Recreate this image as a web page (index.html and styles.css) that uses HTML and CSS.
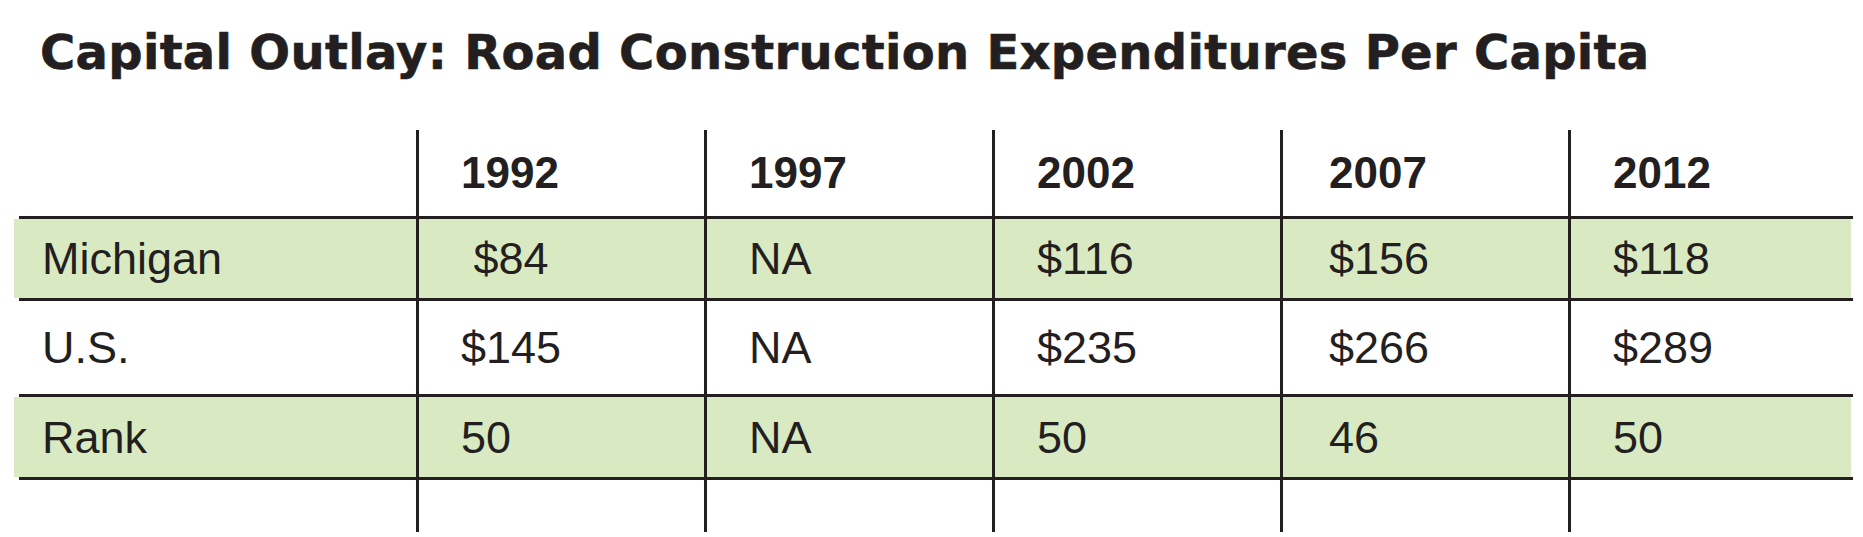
FILE: index.html
```html
<!DOCTYPE html>
<html lang="en">

<head>
  <meta charset="UTF-8">
  <meta name="viewport" content="width=device-width, initial-scale=1.0">
  <title>Capital Outlay: Road Construction Expenditures Per Capita</title>
  <link rel="stylesheet" href="styles.css">
</head>

<body>
  <h1 class="title">Capital Outlay: Road Construction Expenditures Per Capita</h1>
  <div class="table">
    <div class="row head">
      <div class="cell label"></div>
      <div class="cell">1992</div>
      <div class="cell">1997</div>
      <div class="cell">2002</div>
      <div class="cell shift">2007</div>
      <div class="cell">2012</div>
    </div>
    <div class="rule"></div>
    <div class="row green r1">
      <div class="cell label">Michigan</div>
      <div class="cell">&nbsp;$84</div>
      <div class="cell">NA</div>
      <div class="cell">$116</div>
      <div class="cell shift">$156</div>
      <div class="cell">$118</div>
    </div>
    <div class="rule"></div>
    <div class="row r2">
      <div class="cell label">U.S.</div>
      <div class="cell">$145</div>
      <div class="cell">NA</div>
      <div class="cell">$235</div>
      <div class="cell shift">$266</div>
      <div class="cell">$289</div>
    </div>
    <div class="rule"></div>
    <div class="row green r3">
      <div class="cell label">Rank</div>
      <div class="cell">50</div>
      <div class="cell">NA</div>
      <div class="cell">50</div>
      <div class="cell shift">46</div>
      <div class="cell">50</div>
    </div>
    <div class="rule"></div>
    <div class="row tail">
      <div class="cell label"></div>
      <div class="cell"></div>
      <div class="cell"></div>
      <div class="cell"></div>
      <div class="cell"></div>
      <div class="cell"></div>
    </div>
  </div>
</body>

</html>
```

FILE: styles.css
```css
body {
  margin: 0;
  background-color: #fff;
  color: #231f20;
  font-family: "Liberation Sans", Arial, sans-serif;
}

.title {
  margin: 28px 0 0 40px;
  font-family: "DejaVu Sans", sans-serif;
  font-size: 48px;
  font-weight: bold;
  line-height: 48px;
  letter-spacing: 0.3px;
  -webkit-text-stroke: 0.6px #231f20;
  white-space: nowrap;
}

.table {
  margin: 54px 10px 0 14px;
}

.row {
  display: grid;
  grid-template-columns: 402px repeat(4, 288px) 1fr;
  margin-right: 2px;
  font-size: 45px;
  line-height: 1;
}

.row.head {
  height: 86px;
  font-size: 44px;
  font-weight: bold;
}

.row.green {
  background-color: #d9eac3;
}

.row.r1 {
  height: 79px;
}

.row.r2 {
  height: 93px;
}

.row.r3 {
  height: 80px;
}

.row.tail {
  height: 52px;
}

.cell {
  display: flex;
  align-items: center;
  padding-left: 42px;
  border-left: 3px solid #231f20;
  white-space: nowrap;
}

.cell.label {
  padding-left: 28px;
  border-left: none;
}

.cell.shift {
  padding-left: 46px;
}

.rule {
  height: 3px;
  margin-left: 5px;
  background-color: #231f20;
}
```
